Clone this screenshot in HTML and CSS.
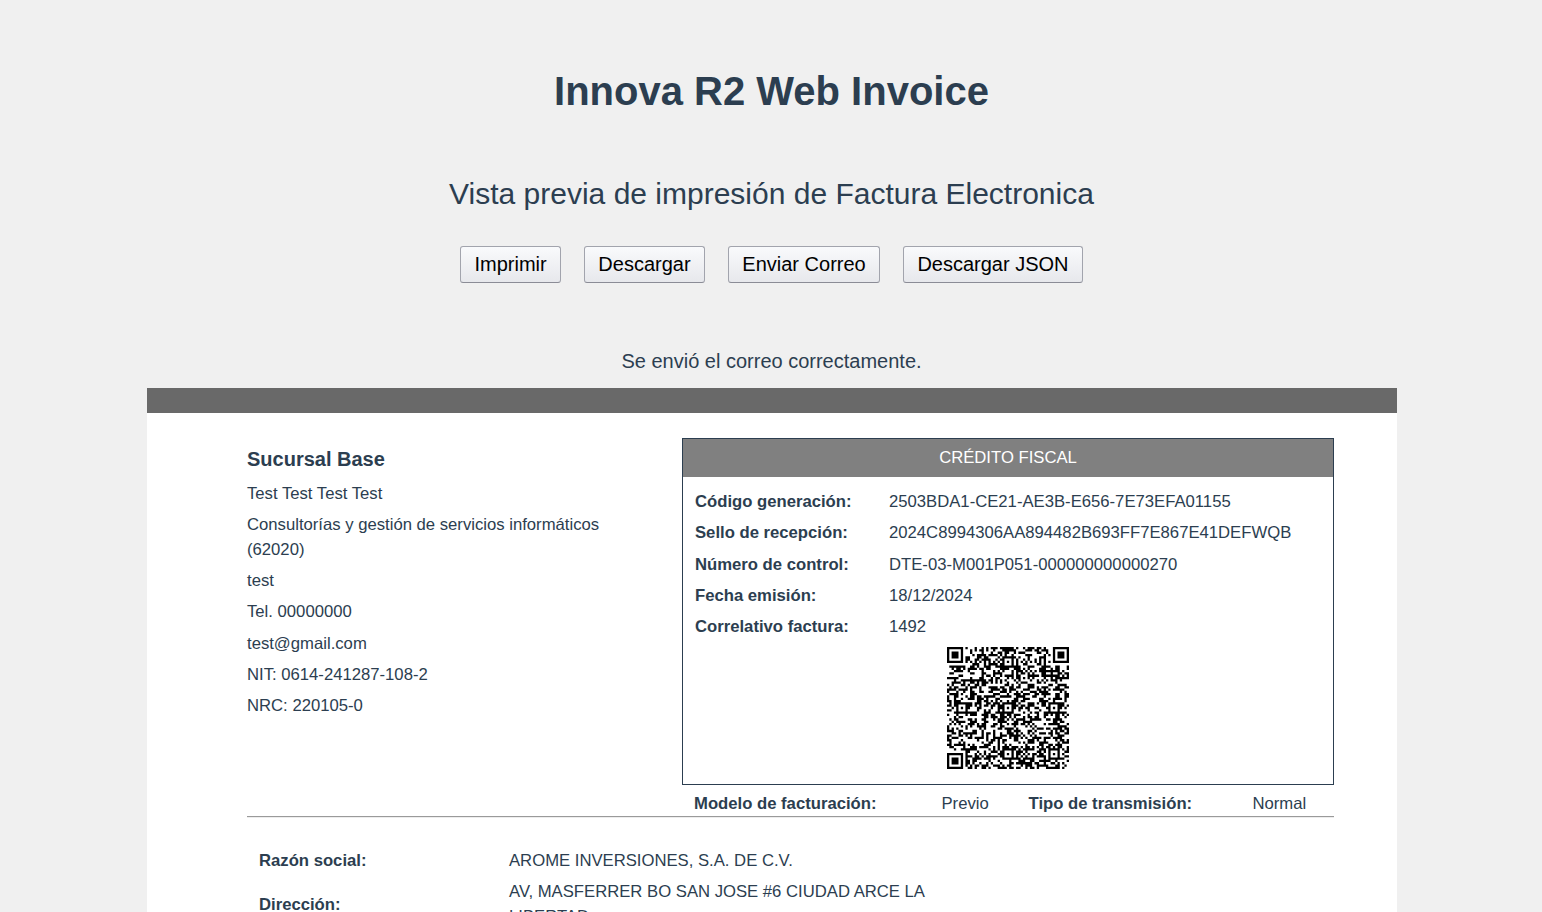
FILE: index.html
```html
<!DOCTYPE html>
<html lang="es">
<head>
<meta charset="utf-8">
<title>Innova R2 Web Invoice</title>
<link rel="stylesheet" href="styles.css">
</head>
<body>
<h1 class="title">Innova R2 Web Invoice</h1>
<p class="subtitle">Vista previa de impresión de Factura Electronica</p>
<div class="actions">
  <button class="btn">Imprimir</button>
  <button class="btn">Descargar</button>
  <button class="btn">Enviar Correo</button>
  <button class="btn">Descargar JSON</button>
</div>
<p class="message">Se envió el correo correctamente.</p>
<main class="paper">
  <div class="head">
    <section class="issuer">
      <h2 class="branch">Sucursal Base</h2>
      <p>Test Test Test Test</p>
      <p>Consultorías y gestión de servicios informáticos (62020)</p>
      <p>test</p>
      <p>Tel. 00000000</p>
      <p>test@gmail.com</p>
      <p>NIT: 0614-241287-108-2</p>
      <p>NRC: 220105-0</p>
    </section>
    <section class="doc">
      <div class="card">
        <div class="card-title">CRÉDITO FISCAL</div>
        <dl class="fields">
          <dt>Código generación:</dt><dd>2503BDA1-CE21-AE3B-E656-7E73EFA01155</dd>
          <dt>Sello de recepción:</dt><dd>2024C8994306AA894482B693FF7E867E41DEFWQB</dd>
          <dt>Número de control:</dt><dd>DTE-03-M001P051-000000000000270</dd>
          <dt>Fecha emisión:</dt><dd>18/12/2024</dd>
          <dt>Correlativo factura:</dt><dd>1492</dd>
        </dl>
        <svg class="qr" id="qr" viewBox="0 0 53 53"><path id="modules" d=""/></svg>
      </div>
      <div class="modes">
        <b>Modelo de facturación:</b><span>Previo</span><b>Tipo de transmisión:</b><span>Normal</span>
      </div>
    </section>
  </div>
  <hr class="rule">
  <dl class="client">
    <dt>Razón social:</dt><dd>AROME INVERSIONES, S.A. DE C.V.</dd>
    <dt>Dirección:</dt><dd>AV, MASFERRER BO SAN JOSE #6 CIUDAD ARCE LA LIBERTAD</dd>
  </dl>
</main>
<script src="qr.js"></script>
</body>
</html>
```
FILE: styles.css
```css
* { box-sizing: border-box; }
body {
  margin: 0;
  padding-left: 1px;
  height: 912px;
  overflow: hidden;
  background: #f0f0f0;
  color: #2c3e50;
  font: 16.68px/25px "Liberation Sans", Arial, sans-serif;
  display: flex;
  flex-direction: column;
  align-items: center;
}
p, h1, h2, dl, dd { margin: 0; }
.title { margin-top: 61px; font-size: 40px; line-height: 60px; }
.subtitle { margin-top: 50px; font-size: 30px; line-height: 45px; }
.actions { display: flex; gap: 23px; margin-top: 30px; }
.btn {
  height: 37px;
  padding: 0 13.35px 1px;
  border: 1px solid #a2a4ad;
  border-bottom-color: #8b8c96;
  border-radius: 3px;
  background: linear-gradient(#f9fafc, #e7e8ec);
  color: #000;
  font: 20px/34px "Liberation Sans", Arial, sans-serif;
}
.message { margin-top: 63px; font-size: 20px; line-height: 30px; }
.paper {
  flex: none;
  width: 1250px;
  height: 1600px;
  margin: 12px 0 0 1px;
  padding: 25px 63px 0 100px;
  border-top: 25px solid #696969;
  background: #fff;
}
.head { display: flex; justify-content: space-between; }
.issuer { width: 400px; padding-top: 6px; }
.issuer p { margin-bottom: 6.25px; }
.branch { margin-bottom: 6.6px; font-size: 20px; line-height: 30px; }
.doc { width: 652px; }
.card { height: 347px; border: 1px solid #2c3e50; }
.card-title { height: 38px; background: #808080; color: #fff; line-height: 37px; text-align: center; }
.fields { display: grid; grid-template-columns: 194px 1fr; row-gap: 6.25px; padding: 12px 12px 0; }
dt, b { font-weight: bold; }
.qr { display: block; width: 122px; height: 122px; margin: 8px auto 0; }
.modes {
  display: grid;
  grid-template-columns: 247.5px 87px 224px 1fr;
  padding: 6px 0 0 12px;
}
.rule { height: 2px; margin: 0; border: 0; border-top: 1px solid #9a9a9a; border-bottom: 1px solid #ededed; }
.client { display: grid; grid-template-columns: 250px 440px; gap: 6.25px 0; align-items: center; padding: 30px 12px 0; }
```
FILE: qr.js
```js
// QR code, version 9, error correction level Q (4 blocks of 16 and 4 of 17 codewords).
// Placeholder payload: the address is assumed, not verified; replace it with the invoice's real lookup URL.
const text = "https://admin.factura.gob.sv/consultaPublica?ambiente=00&codGen=2503BDA1-CE21-AE3B-E656-7E73EFA01155&fechaEmi=2024-12-18";
const VERSION = 9, N = 53, EC = 20, DATA = 132, BLOCKS = [16, 16, 16, 16, 17, 17, 17, 17], LEVEL = 3;

const bits = [];
const push = (v, n) => { for (let i = n - 1; i >= 0; i--) bits.push((v >> i) & 1); };
push(4, 4);
push(text.length, 8);
for (const c of text) push(c.charCodeAt(0), 8);
push(0, 4);
while (bits.length % 8) bits.push(0);
for (let p = 0xec; bits.length < DATA * 8; p ^= 0xfd) push(p, 8);
const data = [];
for (let i = 0; i < bits.length; i += 8) data.push(parseInt(bits.slice(i, i + 8).join(""), 2));

function mul(a, b) {
  let z = 0;
  for (let i = 7; i >= 0; i--) { z = (z << 1) ^ ((z >> 7) * 0x11d); z ^= ((b >> i) & 1) * a; }
  return z;
}
const gen = Array(EC).fill(0);
gen[EC - 1] = 1;
for (let i = 0, root = 1; i < EC; i++, root = mul(root, 2)) {
  for (let j = 0; j < EC; j++) {
    gen[j] = mul(gen[j], root);
    if (j + 1 < EC) gen[j] ^= gen[j + 1];
  }
}
let at = 0;
const blocks = BLOCKS.map(n => data.slice(at, at += n));
const checks = blocks.map(block => {
  const r = Array(EC).fill(0);
  for (const b of block) {
    const f = b ^ r.shift();
    r.push(0);
    gen.forEach((g, i) => { r[i] ^= mul(g, f); });
  }
  return r;
});
const stream = [];
for (let i = 0; i < 17; i++) blocks.forEach(b => { if (i < b.length) stream.push(b[i]); });
for (let i = 0; i < EC; i++) checks.forEach(c => stream.push(c[i]));

function build(mask) {
  const m = Array.from({ length: N }, () => Array(N).fill(0));
  const fixed = Array.from({ length: N }, () => Array(N).fill(false));
  const set = (x, y, v) => { if (x >= 0 && y >= 0 && x < N && y < N) { m[y][x] = v ? 1 : 0; fixed[y][x] = true; } };
  for (let i = 0; i < N; i++) { set(6, i, i % 2 === 0); set(i, 6, i % 2 === 0); }
  for (const [cx, cy] of [[3, 3], [N - 4, 3], [3, N - 4]])
    for (let dy = -4; dy <= 4; dy++) for (let dx = -4; dx <= 4; dx++) {
      const d = Math.max(Math.abs(dx), Math.abs(dy));
      set(cx + dx, cy + dy, d !== 2 && d !== 4);
    }
  for (const [cx, cy] of [[26, 6], [6, 26], [26, 26], [46, 26], [26, 46], [46, 46]])
    for (let dy = -2; dy <= 2; dy++) for (let dx = -2; dx <= 2; dx++)
      set(cx + dx, cy + dy, Math.max(Math.abs(dx), Math.abs(dy)) !== 1);
  const fmt = LEVEL << 3 | mask;
  let rem = fmt;
  for (let i = 0; i < 10; i++) rem = (rem << 1) ^ ((rem >> 9) * 0x537);
  const f = (fmt << 10 | rem) ^ 0x5412, bit = (v, i) => (v >> i) & 1;
  for (let i = 0; i <= 5; i++) set(8, i, bit(f, i));
  set(8, 7, bit(f, 6)); set(8, 8, bit(f, 7)); set(7, 8, bit(f, 8));
  for (let i = 9; i < 15; i++) set(14 - i, 8, bit(f, i));
  for (let i = 0; i < 8; i++) set(N - 1 - i, 8, bit(f, i));
  for (let i = 8; i < 15; i++) set(8, N - 15 + i, bit(f, i));
  set(8, N - 8, 1);
  rem = VERSION;
  for (let i = 0; i < 12; i++) rem = (rem << 1) ^ ((rem >> 11) * 0x1f25);
  const ver = VERSION << 12 | rem;
  for (let i = 0; i < 18; i++) {
    const a = N - 11 + i % 3, b = Math.floor(i / 3);
    set(a, b, bit(ver, i)); set(b, a, bit(ver, i));
  }
  const rules = [
    (x, y) => (x + y) % 2, (x, y) => y % 2, (x, y) => x % 3, (x, y) => (x + y) % 3,
    (x, y) => (Math.floor(x / 3) + Math.floor(y / 2)) % 2, (x, y) => x * y % 2 + x * y % 3,
    (x, y) => (x * y % 2 + x * y % 3) % 2, (x, y) => ((x + y) % 2 + x * y % 3) % 2
  ];
  let k = 0;
  for (let right = N - 1; right >= 1; right -= 2) {
    if (right === 6) right = 5;
    for (let v = 0; v < N; v++) for (let j = 0; j < 2; j++) {
      const x = right - j, y = ((right + 1) & 2) === 0 ? N - 1 - v : v;
      if (fixed[y][x]) continue;
      const d = k < stream.length * 8 ? (stream[k >> 3] >> (7 - (k & 7))) & 1 : 0;
      k++;
      m[y][x] = d ^ (rules[mask](x, y) === 0 ? 1 : 0);
    }
  }
  return m;
}

function penalty(m) {
  let score = 0, dark = 0;
  const lines = m.map(r => r.join("")).concat(m.map((_, x) => m.map(r => r[x]).join("")));
  for (const line of lines) {
    for (const run of line.match(/0{5,}|1{5,}/g) || []) score += run.length - 2;
    score += 40 * (line.match(/(?=00001011101|10111010000)/g) || []).length;
  }
  for (let y = 0; y < N; y++) for (let x = 0; x < N; x++) {
    dark += m[y][x];
    if (x && y && m[y][x] === m[y - 1][x] && m[y][x] === m[y][x - 1] && m[y][x] === m[y - 1][x - 1]) score += 3;
  }
  return score + 10 * Math.floor(Math.abs(dark * 20 / (N * N) - 10));
}

// Each horizontal run of dark modules is one rectangle, so no seams show inside it.
const best = [0, 1, 2, 3, 4, 5, 6, 7].map(build).sort((a, b) => penalty(a) - penalty(b))[0];
let path = "";
best.forEach((row, y) => {
  for (const run of row.join("").matchAll(/1+/g)) path += `M${run.index} ${y}h${run[0].length}v1h-${run[0].length}z`;
});
document.getElementById("modules").setAttribute("d", path);
```
